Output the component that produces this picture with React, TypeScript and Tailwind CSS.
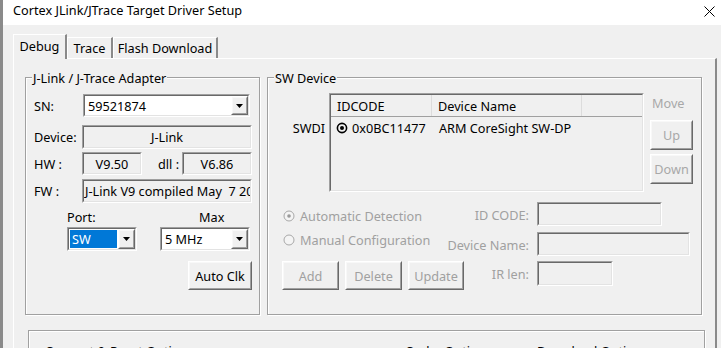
import type { ReactNode } from "react";
import clsx from "clsx";

const Raised = ({ className, children }: { className?: string; children?: ReactNode }) => (
  <div className={clsx("border border-t-white border-l-white border-r-[#696969] border-b-[#696969]", className)}>
    <div className="flex h-full w-full items-center justify-center border border-t-[#f8f8f8] border-l-[#f8f8f8] border-r-[#a0a0a0] border-b-[#a0a0a0] bg-[#f0f0f0]">
      {children}
    </div>
  </div>
);

const Sunken = ({
  className,
  inner,
  children,
}: {
  className?: string;
  inner?: string;
  children?: ReactNode;
}) => (
  <div className={clsx("border border-t-[#a0a0a0] border-l-[#a0a0a0] border-r-white border-b-white", className)}>
    <div className={clsx("h-full w-full border border-t-[#696969] border-l-[#696969] border-r-[#e3e3e3] border-b-[#e3e3e3]", inner)}>
      {children}
    </div>
  </div>
);

const Caret = () => (
  <Raised className="h-full w-[17px] shrink-0">
    <svg width="7" height="4" viewBox="0 0 7 4">
      <path d="M0 0h7L3.5 4z" fill="#000" />
    </svg>
  </Raised>
);

const Combo = ({ className, value, selected }: { className?: string; value: string; selected?: boolean }) => (
  <Sunken className={className} inner="flex bg-white">
    <div className="flex min-w-0 flex-1 items-center pl-[1px] pr-[1px]">
      <span className={clsx("flex h-[18px] w-full items-center pl-[2px]", selected && "bg-[#0078d7] text-white")}>{value}</span>
    </div>
    <Caret />
  </Sunken>
);

const Group = ({ label, className, children }: { label: string; className?: string; children?: ReactNode }) => (
  <div className={clsx("shrink-0 border border-[#a0a0a0] shadow-[inset_1px_1px_0_white,1px_1px_0_white]", className)}>
    <div className="-mt-[8px] ml-[6px] w-fit bg-[#f0f0f0] px-[1px] leading-[16px]">{label}</div>
    {children}
  </div>
);

const Radio = ({ checked, dark }: { checked?: boolean; dark?: boolean }) => (
  <svg width="12" height="12" viewBox="0 0 12 12" className="shrink-0">
    <circle cx="6" cy="6" r={dark ? 4.6 : 5} fill={dark ? "none" : "#f4f4f4"} stroke={dark ? "#000" : "#a8a8a8"} strokeWidth={dark ? 1.6 : 1} />
    {checked && <circle cx="6" cy="6" r={dark ? 2 : 1.8} fill={dark ? "#000" : "#9a9a9a"} />}
  </svg>
);

const Tab = ({ label, active, className }: { label: string; active?: boolean; className?: string }) => (
  <div
    className={clsx(
      "flex items-center justify-center border-t border-l border-r-2 border-t-white border-l-white border-r-[#8a8a8a] bg-[#f0f0f0]",
      active ? "relative z-10 -mb-px h-[25px] pb-[2px]" : "h-[21px]",
      className,
    )}
  >
    {label}
  </div>
);

export default function App() {
  return (
    <div className="flex h-[348px] w-[721px] overflow-hidden bg-[#f0f0f0] font-['Noto_Sans',sans-serif] text-[12.7px] leading-[16px] text-black">
      <div className="w-[3px] shrink-0 bg-[#8a8a8a]" />
      <div className="flex min-w-0 flex-1 flex-col">
        {/* title bar */}
        <div className="flex h-[25px] shrink-0 items-start justify-between bg-white pl-[10px] pr-[6px] pt-[2px]">
          <span>Cortex JLink/JTrace Target Driver Setup</span>
          <svg width="11" height="11" viewBox="0 0 11 11" className="mt-[4px]">
            <path d="M0.5 0.5l10 10M10.5 0.5l-10 10" stroke="#000" strokeWidth="1" />
          </svg>
        </div>

        <div className="flex-1 pl-[10px] pt-[9px]">
          {/* tabs */}
          <div className="flex h-[24px] items-end">
            <Tab label="Debug" active className="w-[54px]" />
            <Tab label="Trace" className="w-[46px]" />
            <Tab label="Flash Download" className="w-[105px]" />
          </div>

          {/* tab panel */}
          <div className="h-[400px] w-[704px] border-t border-l border-r-2 border-t-white border-l-white border-r-[#8a8a8a]">
            <div className="mt-[18px] ml-[11px] flex">
              {/* adapter */}
              <Group label="J-Link / J-Trace Adapter" className="h-[238px] w-[235px]">
                <div className="flex flex-col pl-[8px]">
                  <div className="mt-[8px] flex h-[23px] items-center">
                    <span className="w-[49px]">SN:</span>
                    <Combo className="h-[23px] w-[167px]" value="59521874" />
                  </div>
                  <div className="mt-[8px] flex h-[24px] items-center">
                    <span className="w-[48px]">Device:</span>
                    <Sunken className="h-[24px] w-[170px]" inner="flex items-center justify-center">
                      J-Link
                    </Sunken>
                  </div>
                  <div className="mt-[3px] flex h-[23px] items-center">
                    <span className="w-[48px]">HW :</span>
                    <Sunken className="h-[23px] w-[60px]" inner="flex items-center justify-center">
                      V9.50
                    </Sunken>
                    <span className="ml-[16px] w-[24px] whitespace-nowrap">dll :</span>
                    <Sunken className="h-[23px] w-[70px]" inner="flex items-center justify-center">
                      V6.86
                    </Sunken>
                  </div>
                  <div className="mt-[4px] flex h-[24px] items-center">
                    <span className="w-[48px]">FW :</span>
                    <Sunken className="h-[24px] w-[170px]" inner="flex items-center overflow-hidden whitespace-pre pl-[1px]">
                      J-Link V9 compiled May  7 2017
                    </Sunken>
                  </div>
                  <div className="mt-[6px] flex h-[16px] items-center">
                    <span className="ml-[33px] w-[132px]">Port:</span>
                    <span>Max</span>
                  </div>
                  <div className="mt-[2px] flex h-[24px]">
                    <Combo className="ml-[33px] h-[24px] w-[70px]" value="SW" selected />
                    <Combo className="ml-[23px] h-[24px] w-[90px]" value="5 MHz" />
                  </div>
                  <Raised className="mt-[10px] ml-[154px] h-[29px] w-[64px]">Auto Clk</Raised>
                </div>
              </Group>

              {/* SW device */}
              <Group label="SW Device" className="ml-[7px] h-[238px] w-[435px]">
                <div className="mt-[7px] flex">
                  <div className="w-[61px] pr-[4px] pt-[27px] text-right">SWDI</div>
                  <Sunken className="h-[99px] w-[315px]">
                    <div className="flex h-[22px] border-b border-[#a0a0a0]">
                      <div className="flex w-[101px] items-center border-r border-[#dcdcdc] pl-[6px]">IDCODE</div>
                      <div className="flex w-[150px] items-center border-r border-[#dcdcdc] pl-[6px]">Device Name</div>
                      <div className="flex-1" />
                    </div>
                    <div className="flex h-[22px] items-center">
                      <div className="flex w-[101px] items-center gap-[4px] pl-[5px]">
                        <Radio checked dark />
                        <span>0x0BC11477</span>
                      </div>
                      <span className="pl-[7px]">ARM CoreSight SW-DP</span>
                    </div>
                  </Sunken>
                  <div className="ml-[5px] flex flex-col text-[#a8a8a8]">
                    <span className="mt-[2px] pl-[3px]">Move</span>
                    <Raised className="mt-[9px] ml-[1px] h-[30px] w-[43px]">Up</Raised>
                    <Raised className="mt-[4px] ml-[1px] h-[30px] w-[43px]">Down</Raised>
                  </div>
                </div>

                <div className="text-[#a0a0a0]">
                  <div className="mt-[10px] flex h-[24px]">
                    <div className="flex w-[200px] items-center gap-[5px] pl-[15px] pt-[3px]">
                      <Radio checked />
                      <span>Automatic Detection</span>
                    </div>
                    <div className="flex w-[61px] justify-end whitespace-nowrap pt-[5px]">ID CODE:</div>
                    <Sunken className="ml-[8px] h-[24px] w-[125px]" />
                  </div>
                  <div className="mt-[6px] flex h-[24px]">
                    <div className="flex w-[200px] items-start gap-[5px] pl-[15px] pt-[2px]">
                      <Radio />
                      <span className="-mt-[2px]">Manual Configuration</span>
                    </div>
                    <div className="flex w-[61px] justify-end whitespace-nowrap pt-[5px]">Device Name:</div>
                    <Sunken className="ml-[8px] h-[24px] w-[153px]" />
                  </div>
                  <div className="mt-[5px] flex h-[29px]">
                    <div className="flex w-[200px] pl-[14px]">
                      <Raised className="h-[29px] w-[57px]">Add</Raised>
                      <Raised className="ml-[6px] h-[29px] w-[57px]">Delete</Raised>
                      <Raised className="ml-[6px] h-[29px] w-[56px]">Update</Raised>
                    </div>
                    <div className="flex w-[61px] justify-end whitespace-nowrap pt-[5px]">IR len:</div>
                    <Sunken className="ml-[8px] h-[25px] w-[76px]" />
                  </div>
                </div>
              </Group>
            </div>

            {/* options box, cut off at the bottom */}
            <div className="mt-[15px] ml-[14px] h-[80px] w-[677px] border border-[#a0a0a0] shadow-[inset_1px_1px_0_white,1px_1px_0_white]">
              <div className="mt-[12px] flex">
                <span className="ml-[16px] w-[360px]">Connect &amp; Reset Options</span>
                <span className="w-[132px]">Cache Options</span>
                <span>Download Options</span>
              </div>
            </div>
          </div>
        </div>
      </div>
    </div>
  );
}
